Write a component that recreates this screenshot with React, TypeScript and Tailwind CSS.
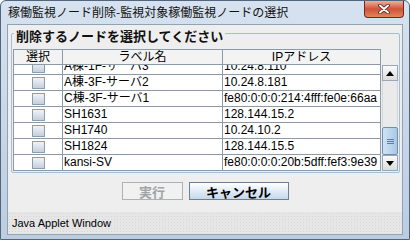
import React from 'react'

type Node = { label: string; ip: string }

const nodes: Node[] = [
  { label: 'A棟-1F-サーバ3', ip: '10.24.8.110' },
  { label: 'A棟-3F-サーバ2', ip: '10.24.8.181' },
  { label: 'C棟-3F-サーバ1', ip: 'fe80:0:0:0:214:4fff:fe0e:66aa' },
  { label: 'SH1631', ip: '128.144.15.2' },
  { label: 'SH1740', ip: '10.24.10.2' },
  { label: 'SH1824', ip: '128.144.15.5' },
  { label: 'kansi-SV', ip: 'fe80:0:0:0:20b:5dff:fef3:9e39' },
]

const font = { fontFamily: '"Liberation Sans", "Noto Sans CJK JP", sans-serif' }

function Checkbox() {
  return (
    <span className="block h-[12px] w-[13px] border border-[#8d9cad] bg-gradient-to-b from-[#eef2f6] via-[#dbe3eb] to-[#c3cfdb]" />
  )
}

function ArrowButton({ down }: { down?: boolean }) {
  return (
    <div className="flex h-[16px] items-center justify-center border border-[#9aa6b3] bg-gradient-to-b from-[#fafafa] to-[#dcdcdc]">
      <svg viewBox="0 0 8 5" className="h-[5px] w-[8px]" aria-hidden="true">
        <path d={down ? 'M0 0h8L4 5z' : 'M0 5h8L4 0z'} fill="#000" />
      </svg>
    </div>
  )
}

function Scrollbar() {
  return (
    <div className="flex h-[106px] w-[16px] flex-col">
      <ArrowButton />
      <div className="flex-1 border-x border-[#d6d6d6] bg-[#eaeaea]" />
      <div className="flex h-[28px] flex-col items-center justify-center gap-[1px] rounded-[2px] border border-[#6d8fb2] bg-gradient-to-r from-[#cfe2f5] to-[#a9c8e6]">
        <span className="block h-px w-[7px] bg-[#5a7ea6]" />
        <span className="block h-px w-[7px] bg-[#5a7ea6]" />
        <span className="block h-px w-[7px] bg-[#5a7ea6]" />
      </div>
      <ArrowButton down />
    </div>
  )
}

function NodeTable() {
  return (
    <div className="flex" style={font}>
      <div className="w-[368px] border-l border-[#8c9aa8] text-[12px] text-black">
        <div className="grid h-[16px] grid-cols-[49px_160px_158px] border-y border-[#8c9aa8] bg-[#f3f3f3] leading-[14px]">
          <div className="border-r border-[#8c9aa8] text-center">選択</div>
          <div className="border-r border-[#8c9aa8] text-center">ラベル名</div>
          <div className="border-r border-[#8c9aa8] text-center">IPアドレス</div>
        </div>
        <div className="h-[106px] overflow-hidden bg-white">
          {/* list is scrolled to the end: top row half hidden */}
          <div className="-mt-[6px]">
            {nodes.map((node) => (
              <div
                key={node.label}
                className="grid h-[16px] grid-cols-[49px_160px_158px] border-b border-[#8c9aa8] leading-[15px]"
              >
                <div className="flex items-center justify-center border-r border-[#8c9aa8]">
                  <Checkbox />
                </div>
                <div className="truncate border-r border-[#8c9aa8] pl-[1px]">{node.label}</div>
                <div className="truncate whitespace-nowrap border-r border-[#8c9aa8] pl-[1px]">{node.ip}</div>
              </div>
            ))}
          </div>
        </div>
      </div>
      <div className="pl-[1px] pt-[16px]">
        <Scrollbar />
      </div>
    </div>
  )
}

export default function App() {
  return (
    <div className="flex h-[240px] w-[410px] flex-col rounded-t-[6px] border border-[#51657c] bg-gradient-to-b from-[#d6e2ef] to-[#bccde0]">
      <div className="flex h-[24px] items-start justify-between">
        <span
          className="pl-[7px] pt-[3px] text-[12px] leading-[16px] text-[#111]"
          style={{ fontFamily: '"Noto Sans CJK JP", sans-serif' }}
        >
          稼働監視ノード削除-監視対象稼働監視ノードの選択
        </span>
        <div className="mr-[5px] flex h-[17px] w-[40px] items-center justify-center rounded-b-[4px] border border-t-0 border-[#6e2a1e] bg-gradient-to-b from-[#eab0a0] via-[#cf5236] to-[#e3845f]">
          <svg viewBox="0 0 12 10" className="h-[10px] w-[12px]" aria-hidden="true">
            <path d="M2 1.5l8 7M10 1.5l-8 7" stroke="#4a2018" strokeWidth="3.6" strokeLinecap="round" />
            <path d="M2 1.5l8 7M10 1.5l-8 7" stroke="#fff" strokeWidth="2" strokeLinecap="round" />
          </svg>
        </div>
      </div>

      <div className="mx-[6px] flex flex-1 flex-col border border-[#8ea2b8] bg-[#eeeeee]">
        <div className="relative ml-[3px] mr-[2px] mt-[8px] rounded-[2px] border border-[#a7bdd4] pb-[1px] pl-[1px] pr-[2px] pt-[15px]">
          <span
            className="absolute -top-[6px] left-[2px] bg-[#eeeeee] px-[2px] text-[13px] font-bold leading-[16px] text-[#111]"
            style={{ fontFamily: '"Noto Sans CJK JP", sans-serif' }}
          >
            削除するノードを選択してください
          </span>
          <NodeTable />
        </div>

        <div
          className="mt-[9px] flex justify-center gap-[6px] text-[13px] font-bold"
          style={{ fontFamily: '"Noto Sans CJK JP", sans-serif' }}
        >
          <button
            type="button"
            disabled
            className="flex h-[18px] w-[61px] items-center justify-center border border-[#adb2b6] bg-[#f1f1f1] leading-none text-[#a3a3a3]"
          >
            実行
          </button>
          <button
            type="button"
            className="flex h-[18px] w-[100px] items-center justify-center border border-[#6f8094] bg-gradient-to-b from-[#ffffff] to-[#c4d8ea] leading-none text-black"
          >
            キャンセル
          </button>
        </div>

        <div className="mt-[12px] flex h-[22px] items-center bg-[#e6e6e6] bg-[radial-gradient(#d6d6d6_0.7px,transparent_0.7px)] bg-[length:3px_3px] pl-[4px] text-[11px] text-black" style={font}>
          Java Applet Window
        </div>
      </div>
      <div className="h-[4px]" />
    </div>
  )
}
